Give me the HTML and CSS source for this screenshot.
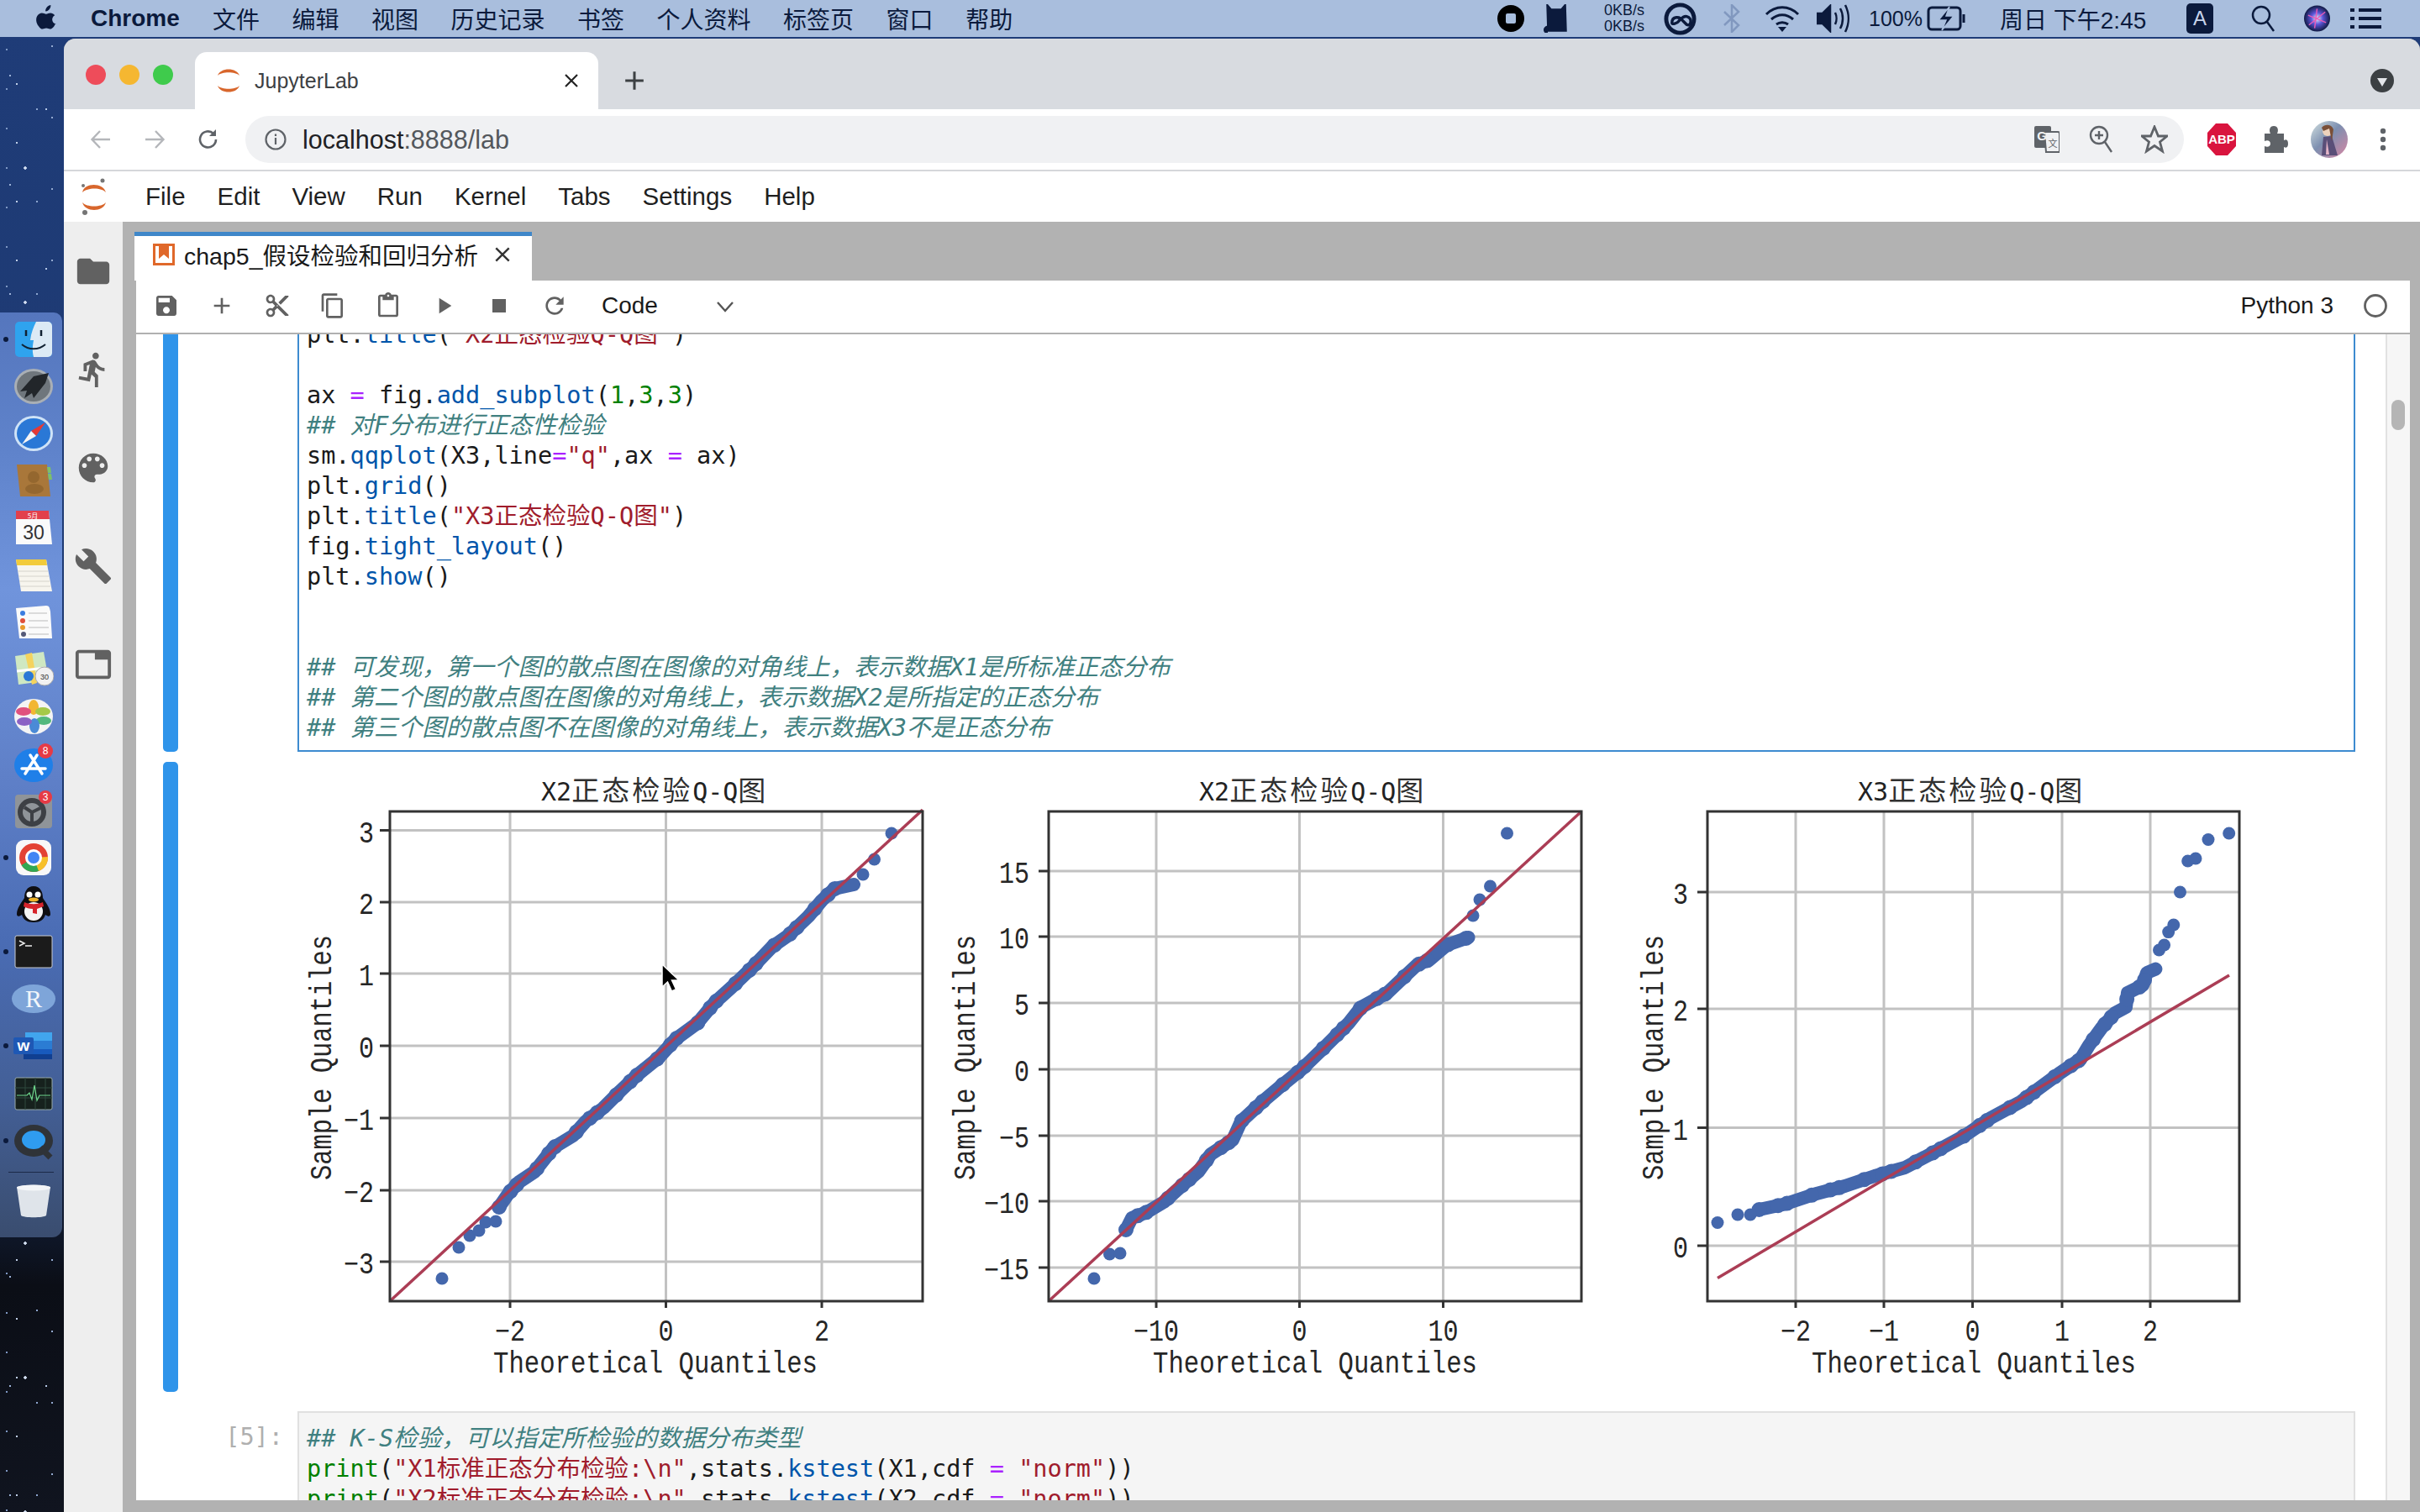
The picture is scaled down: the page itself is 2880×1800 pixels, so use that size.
FILE: index.html
```html
<!DOCTYPE html>
<html lang="zh">
<head>
<meta charset="utf-8">
<title>JupyterLab</title>
<link rel="stylesheet" href="styles.css">
</head>
<body>
<header class="menubar">
  <svg class="apple" viewBox="0 0 24 28"><path d="M17 1c.2 2-.6 3.600-1.600 4.800-1.100 1.300-2.600 2.200-4.200 2-.2-1.800.7-3.500 1.600-4.600C13.900 2 15.600 1.100 17 1zM22.500 21c-.7 1.600-1 2.300-1.900 3.700-1.300 1.900-3 2.900-4.500 2.900-1.400 0-2.200-.9-4-.9s-2.700.9-4.100.9c-1.700 0-3-1.200-4.400-3.200C.5 21 .3 15.800 2 13.100c1.300-2 3.300-3.200 5.200-3.200s3.200 1.100 4.800 1.100c1.500 0 2.500-1.100 4.700-1.100 1.700 0 3.500.9 4.800 2.500-4.200 2.300-3.500 8.300 1 9.600z"/></svg>
  <strong class="menu-app">Chrome</strong>
  <nav class="menu-items"><span>文件</span><span>编辑</span><span>视图</span><span>历史记录</span><span>书签</span><span>个人资料</span><span>标签页</span><span>窗口</span><span>帮助</span></nav>
  <div class="status">
    <svg class="st-stop" viewBox="0 0 32 32"><circle cx="16" cy="16" r="16"/><rect x="10" y="10" width="12" height="12" rx="2" fill="#a9bedd"/></svg>
    <svg class="st-cat ml-22" viewBox="0 0 32 34"><path d="M5 0l5 6h12l5-6 1 32H6zM6 26c-3 1-5 3-4 6 .6 1.500 2.500 2 4 1.500" stroke="#0b1a3c" stroke-width="1.500"/></svg>
    <div class="st-net ml-41"><span>0KB/s</span><span>0KB/s</span></div>
    <svg class="st-cc ml-19" viewBox="0 0 40 40" fill="none" stroke="#0b1a3c" stroke-width="5"><circle cx="20" cy="20" r="17"/><path d="M10 25c0-9 10-8 13-3l5 5c5 3 8-8 0-10-4-1-6 2-9 5-3 4-9 5-9 3z" stroke-width="3.500"/></svg>
    <svg class="st-bt ml-31" viewBox="0 0 22 34" fill="none" stroke="#8198bf" stroke-width="2.500"><path d="M2 9l17 16-8 8V1l8 8L2 25"/></svg>
    <svg class="st-wifi ml-28" viewBox="0 0 42 34" fill="none" stroke="#0b1a3c" stroke-width="3"><path d="M2 12c11-11 27-11 38 0M8 18c8-7 18-7 26 0M14 24c4-3 10-3 14 0"/><path d="M21 33l-5-6h10z" fill="#0b1a3c" stroke="none"/></svg>
    <svg class="st-vol ml-20" viewBox="0 0 40 34" fill="none" stroke="#0b1a3c" stroke-width="2.500"><path d="M1 11h6l9-9v30l-9-9H1z" fill="#0b1a3c"/><path d="M22 10c2 4 2 10 0 14M28 5c4 7 4 17 0 24M34 1c5 10 5 22 0 32"/></svg>
    <span class="st-pct ml-22">100%</span>
    <svg class="st-batt ml-8" viewBox="0 0 47 32" fill="none" stroke="#0b1a3c" stroke-width="3"><rect x="2" y="3" width="38" height="26" rx="4"/><path d="M44 11v10"/><path d="M27 2L14 18h9l-5 12 14-17h-9z" fill="#0b1a3c" stroke="#a9bedd" stroke-width="1.500"/></svg>
    <span class="st-clock ml-40">周日 下午2:45</span>
    <span class="st-a ml-39">A</span>
    <svg class="st-search ml-44" viewBox="0 0 30 34" fill="none" stroke="#0b1a3c" stroke-width="2.500"><circle cx="13" cy="13" r="10"/><path d="M20 21l8 11"/></svg>
    <svg class="st-siri ml-34" viewBox="0 0 32 32"><defs><radialGradient id="siri"><stop offset="0" stop-color="#e8f6ff"/><stop offset=".45" stop-color="#5c55d8"/><stop offset="1" stop-color="#101a44"/></radialGradient></defs><circle cx="16" cy="16" r="16" fill="url(#siri)"/><path d="M5 12l22 9M16 4l-3 24M6 24L26 8" stroke="#e85bb5" stroke-width="1.500"/></svg>
    <svg class="st-list ml-24" viewBox="0 0 37 30"><path d="M0 3h5v4H0zM10 3h27v4H10zM0 13h5v4H0zM10 13h27v4H10zM0 23h5v4H0zM10 23h27v4H10z" fill="#0b1a3c"/></svg>
  </div>
</header>

<div class="desktop">
  <aside class="dock-col">
    <div class="dock">
      <div class="dock-item running"><svg viewBox="0 0 48 48"><rect x="2" y="3" width="44" height="42" rx="5" fill="#2fa3ee"/><path d="M27 3h14a5 5 0 0 1 5 5v32a5 5 0 0 1-5 5H24c-2-8-1-14 0-20h-4C21 16 24 9 27 3z" fill="#dceaf5"/><path d="M10 30c8 7 20 7 28 0" fill="none" stroke="#123" stroke-width="2"/><path d="M15 13v7M33 13v7" stroke="#123" stroke-width="2.500"/></svg></div>
      <div class="dock-item"><svg viewBox="0 0 48 48"><ellipse cx="24" cy="24" rx="23" ry="21" fill="#a9afb5"/><ellipse cx="24" cy="24" rx="20" ry="18" fill="#6f767c"/><path d="M42 8L24 12 8 30l8-1-3 9 9-6 2 6 14-18z" fill="#22262a"/></svg></div>
      <div class="dock-item"><svg viewBox="0 0 48 48"><ellipse cx="24" cy="24" rx="23" ry="21" fill="#cfe3f7"/><ellipse cx="24" cy="24" rx="20" ry="18" fill="#2a78d6"/><path d="M38 11L21 21l6 6z" fill="#e53935"/><path d="M10 37l11-16 6 6z" fill="#f5f5f5"/></svg></div>
      <div class="dock-item"><svg viewBox="0 0 48 48"><path d="M4 5h36l4 38H8z" fill="#a9773a"/><path d="M40 8h4l1 7h-4zM41 16h4l1 7h-4z" fill="#7cc06a"/><circle cx="24" cy="20" r="7" fill="#94672f"/><ellipse cx="25" cy="34" rx="11" ry="6" fill="#94672f"/></svg></div>
      <div class="dock-item"><svg viewBox="0 0 48 48"><path d="M3 4h39l4 40H3z" fill="#fafafa"/><path d="M3 4h39l1 10H3z" fill="#e2404c"/><text class="cal-m" x="23" y="13">5月</text><text class="cal-d" x="24" y="38">30</text></svg></div>
      <div class="dock-item"><svg viewBox="0 0 48 48"><path d="M3 5h36l7 38H9z" fill="#f7f5ee"/><path d="M3 5h36l1 7H4z" fill="#f2cb3b"/><path d="M5 19h36M6 25h36M7 31h36M8 37h36" stroke="#d5d3cb"/></svg></div>
      <div class="dock-item"><svg viewBox="0 0 48 48"><path d="M3 7l36-3c4 0 4 3 5 7l2 32H7z" fill="#fafafa"/><circle cx="11" cy="13" r="3" fill="#3b7de0"/><circle cx="11" cy="22" r="3" fill="#e0503a"/><circle cx="11" cy="30" r="3" fill="#e89a2c"/><circle cx="12" cy="38" r="3" fill="#555a78"/><path d="M18 13h22M18 22h23M18 30h24M18 38h24" stroke="#bbb"/></svg></div>
      <div class="dock-item"><svg viewBox="0 0 48 48"><path d="M2 8l34-5 6 34-36 5z" fill="#cfe8c2"/><path d="M14 6l8 36 6-2-6-36z" fill="#f4d35e"/><path d="M4 26l34-4" stroke="#fff" stroke-width="3"/><circle cx="18" cy="32" r="6" fill="#2a78d6"/><circle cx="37" cy="32" r="11" fill="#f1f1f1" stroke="#aaa"/><text class="map-t" x="37" y="36">30</text></svg></div>
      <div class="dock-item"><svg viewBox="0 0 48 48"><ellipse cx="24" cy="24" rx="23" ry="21" fill="#f4f4f4"/><ellipse cx="24" cy="13" rx="6" ry="9" fill="#f2b632"/><ellipse cx="35" cy="18" rx="9" ry="5" fill="#a5c948"/><ellipse cx="36" cy="29" rx="9" ry="5" fill="#53b87d"/><ellipse cx="25" cy="35" rx="6" ry="9" fill="#4b8ad6"/><ellipse cx="13" cy="30" rx="9" ry="5" fill="#8b62c4"/><ellipse cx="12" cy="18" rx="9" ry="5" fill="#e0517e"/></svg></div>
      <div class="dock-item"><svg viewBox="0 0 48 48"><ellipse cx="24" cy="26" rx="23" ry="20" fill="#1f7fe8"/><path d="M14 36l14-22M34 36L20 14M10 30h28" stroke="#fff" stroke-width="3.500" fill="none" stroke-linecap="round"/><circle cx="38" cy="9" r="9" fill="#e63a45"/><text class="badge-t" x="38" y="13">8</text></svg></div>
      <div class="dock-item"><svg viewBox="0 0 48 48"><rect x="2" y="5" width="44" height="40" rx="4" fill="#8f9499"/><circle cx="22" cy="26" r="17" fill="#3d4045"/><circle cx="22" cy="26" r="11" fill="#8f9499"/><path d="M22 26l-9-6M22 26l10-5M22 26v11" stroke="#3d4045" stroke-width="4"/><circle cx="38" cy="8" r="8" fill="#e63a45"/><text class="badge-t" x="38" y="12">3</text></svg></div>
      <div class="dock-item running"><svg viewBox="0 0 48 48"><rect x="3" y="3" width="42" height="42" rx="9" fill="#f8f8f8"/><circle cx="24" cy="24" r="17" fill="#e34234"/><path d="M24 24L9.500 33A17 17 0 0 0 31 39.500z" fill="#31a853"/><path d="M24 24l17-1A17 17 0 0 1 30 40z" fill="#f7c02a"/><circle cx="24" cy="24" r="8.500" fill="#4285f4" stroke="#fff" stroke-width="3"/></svg></div>
      <div class="dock-item"><svg viewBox="0 0 48 48"><path d="M24 2c8 0 11 7 11 14 3 5 9 12 9 19 0 3-2 4-6 1-2 6-6 9-14 9s-12-3-14-9c-4 3-6 2-6-1 0-7 6-14 9-19C13 9 16 2 24 2z" fill="#0e0e12"/><ellipse cx="24" cy="32" rx="11" ry="11" fill="#f4f4f4"/><circle cx="19" cy="12" r="3.500" fill="#fff"/><circle cx="29" cy="12" r="3.500" fill="#fff"/><path d="M13 21c6 3 16 3 22 0l1 5-8 3v6l-5-1v-5c-4 0-8-1-11-3z" fill="#d6242b"/><ellipse cx="24" cy="18" rx="6" ry="2.500" fill="#f0b429"/></svg></div>
      <div class="dock-item running"><svg viewBox="0 0 48 48"><rect x="2" y="5" width="44" height="38" rx="2" fill="#1b1b1b" stroke="#c9ccd1"/><path d="M7 11l6 3-6 3M14 17h8" stroke="#eee" stroke-width="1.500" fill="none"/></svg></div>
      <div class="dock-item dock-r"><span>R</span></div>
      <div class="dock-item running"><svg viewBox="0 0 48 48"><path d="M14 8h32v10H14z" fill="#41a5ee"/><path d="M14 18h32v10H14z" fill="#2b7cd3"/><path d="M12 28h34v6H12z" fill="#185abd"/><path d="M12 34h34v6H12z" fill="#103f91"/><rect x="0" y="14" width="24" height="20" rx="2" fill="#1e58b5"/><text class="word-t" x="12" y="30">w</text></svg></div>
      <div class="dock-item"><svg viewBox="0 0 48 48"><rect x="2" y="5" width="44" height="38" rx="2" fill="#16211d" stroke="#9aa"/><path d="M2 17h44M2 29h44M14 5v38M26 5v38M38 5v38" stroke="#2f4a3e"/><path d="M4 26h12l3-3 3 8 3-17 3 18 3-6h13" stroke="#6fd88d" fill="none" stroke-width="1.200"/></svg></div>
      <div class="dock-item running"><svg viewBox="0 0 48 48"><ellipse cx="24" cy="24" rx="23" ry="19" fill="#2f3338"/><ellipse cx="24" cy="23" rx="14" ry="11" fill="#2f9cf0"/><path d="M32 32l12 12" stroke="#2f3338" stroke-width="7"/></svg></div>
      <div class="dock-sep"></div>
      <div class="dock-item"><svg viewBox="0 0 48 48"><path d="M4 8c6-3 34-3 40 0l-5 34c-3 3-27 3-30 0z" fill="#dfe4ea"/><ellipse cx="24" cy="9" rx="20" ry="3.500" fill="#f4f6f8"/></svg></div>
    </div>
  </aside>

  <main class="window">
    <div class="tabstrip">
      <div class="lights"><i class="red"></i><i class="amber"></i><i class="green"></i></div>
      <div class="chrome-tab">
        <svg class="favicon" viewBox="0 0 30 34"><path d="M2 11C5 1 25 1 28 11 23 6 7 6 2 11zM2 23c3 10 23 10 26 0-5 5-21 5-26 0z" fill="#d8662c"/></svg>
        <span class="chrome-tab-title">JupyterLab</span>
        <svg class="chrome-tab-x" viewBox="0 0 20 20" stroke="#222" stroke-width="2.200"><path d="M3 3l14 14M17 3L3 17"/></svg>
      </div>
      <svg class="newtab" viewBox="0 0 24 24" stroke="#3c4043" stroke-width="2.800"><path d="M12 2v20M2 12h20"/></svg>
      <svg class="tabcaret" viewBox="0 0 28 28"><circle cx="14" cy="14" r="14" fill="#3c4043"/><path d="M8 11h12l-6 10z" fill="#e4e6ea"/></svg>
    </div>

    <div class="urlbar">
      <svg class="nav-ic ml-30" viewBox="0 0 28 28" fill="none" stroke="#b4b6ba" stroke-width="2.400"><path d="M25 14H4M13 4L3.500 14 13 24"/></svg>
      <svg class="nav-ic ml-36" viewBox="0 0 28 28" fill="none" stroke="#b4b6ba" stroke-width="2.400"><path d="M3 14h21M15 4l9.500 10L15 24"/></svg>
      <svg class="nav-ic ml-36" viewBox="0 0 28 28" fill="none" stroke="#5f6368" stroke-width="2.600"><path d="M23 14a9.500 9.500 0 1 1-3-7"/><path d="M23 2v8h-8" fill="#5f6368" stroke="none"/></svg>
      <div class="pill">
        <svg class="info" viewBox="0 0 28 28" fill="none" stroke="#5f6368" stroke-width="2.200"><circle cx="14" cy="14" r="11.500"/><path d="M14 12v8M14 7.500v2.500"/></svg>
        <span class="url">localhost<em>:8888/lab</em></span>
        <svg class="pill-translate" viewBox="0 0 30 34"><rect x="0" y="1" width="20" height="26" rx="2" fill="#5f6368"/><path d="M12 8h16a2 2 0 0 1 2 2v22H14z" fill="#f0f1f3" stroke="#5f6368" stroke-width="2"/><text class="tr-g" x="9" y="18">G</text><text class="tr-z" x="22" y="26">文</text></svg>
        <svg class="pill-zoom ml-35" viewBox="0 0 28 34" fill="none" stroke="#5f6368" stroke-width="2.400"><circle cx="12" cy="12" r="10"/><path d="M19 20l8 12M12 7v10M7 12h10"/></svg>
        <svg class="pill-star ml-34" viewBox="0 0 32 34" fill="none" stroke="#5f6368" stroke-width="2.800"><path d="M16 2l4.500 11H31l-8.500 7 3 11L16 24.500 6.500 31l3-11L1 13h10.500z"/></svg>
      </div>
      <svg class="abp ml-28" viewBox="0 0 34 38"><path d="M10 0h14l10 11v16L24 38H10L0 27V11z" fill="#d9143e"/><text class="abp-t" x="17" y="24">ABP</text></svg>
      <svg class="puzzle ml-32" viewBox="0 0 30 34"><path d="M2 10h7c-2-4-1-9 4-9s6 5 4 9h8v8c4-2 5 1 5 4s-1 6-5 4v7H2v-8c4 2 7 0 7-3s-3-5-7-3z" fill="#5f6368"/></svg>
      <svg class="avatar ml-27" viewBox="0 0 44 44"><defs><linearGradient id="av" x1="0" y1="0" x2="1" y2="1"><stop offset="0" stop-color="#d5e3e2"/><stop offset=".45" stop-color="#7d8fb0"/><stop offset="1" stop-color="#d887a4"/></linearGradient></defs><circle cx="22" cy="22" r="22" fill="url(#av)"/><circle cx="20" cy="12" r="6" fill="#edd2bc"/><path d="M15 19l10-1 7 23H13z" fill="#5a4f78"/><path d="M19 22l3 18h-4z" fill="#e5b5c8"/><path d="M13 8c4-5 12-4 14 2l-2 14-3-15-7 3z" fill="#7a4f38"/></svg>
      <svg class="dots ml-38" viewBox="0 0 8 28" fill="#5f6368"><circle cx="4" cy="4" r="3.200"/><circle cx="4" cy="14" r="3.200"/><circle cx="4" cy="24" r="3.200"/></svg>
    </div>

    <nav class="jp-menu">
      <svg class="jp-logo" viewBox="0 0 32 46"><path d="M2 18C4 6 27 6 30 18 25 12 8 12 2 18zM2 30c3 12 25 12 28 0-5 6-23 6-28 0z" fill="#d8662c"/><circle cx="26" cy="4" r="2.500" fill="#757575"/><circle cx="3" cy="10" r="2" fill="#757575"/><circle cx="5" cy="42" r="3" fill="#757575"/></svg>
      <span>File</span><span>Edit</span><span>View</span><span>Run</span><span>Kernel</span><span>Tabs</span><span>Settings</span><span>Help</span>
    </nav>

    <div class="jp-main">
      <aside class="sidebar">
        <svg viewBox="0 0 24 24"><path d="M10 4H4c-1.100 0-2 .9-2 2v12c0 1.100.9 2 2 2h16c1.100 0 2-.9 2-2V8c0-1.100-.9-2-2-2h-8l-2-2z"/></svg>
        <svg viewBox="0 0 24 24"><path d="M13.490 5.480c1.100 0 2-.9 2-2s-.9-2-2-2-2 .9-2 2 .9 2 2 2zm-3.600 13.900l1-4.400 2.100 2v6h2v-7.500l-2.100-2 .6-3c1.300 1.500 3.300 2.500 5.500 2.500v-2c-1.900 0-3.500-1-4.300-2.400l-1-1.600c-.4-.6-1-1-1.700-1-.3 0-.5.1-.8.1l-5.200 2.200v4.700h2v-3.400l1.800-.7-1.600 8.100-4.900-1-.4 2 7 1.400z"/></svg>
        <svg viewBox="0 0 24 24"><path d="M12 3c-4.970 0-9 4.030-9 9s4.030 9 9 9c.83 0 1.500-.67 1.500-1.500 0-.39-.15-.74-.39-1.010-.23-.26-.38-.61-.38-.99 0-.83.67-1.500 1.500-1.500H16c2.760 0 5-2.240 5-5 0-4.420-4.030-8-9-8zm-5.500 9c-.83 0-1.500-.67-1.500-1.500S5.670 9 6.500 9 8 9.670 8 10.500 7.330 12 6.500 12zm3-4C8.670 8 8 7.330 8 6.500S8.670 5 9.500 5s1.500.67 1.500 1.500S10.330 8 9.500 8zm5 0c-.83 0-1.500-.67-1.500-1.500S13.670 5 14.500 5s1.500.67 1.500 1.500S15.330 8 14.500 8zm3 4c-.83 0-1.500-.67-1.500-1.500S16.670 9 17.500 9s1.500.67 1.500 1.500-.67 1.500-1.500 1.500z"/></svg>
        <svg viewBox="0 0 24 24"><path d="M22.700 19l-9.100-9.100c.9-2.300.4-5-1.500-6.900-2-2-5-2.400-7.400-1.300L9 6 6 9 1.600 4.700C.4 7.100.9 10.100 2.900 12.100c1.900 1.900 4.600 2.400 6.900 1.500l9.100 9.100c.4.4 1 .4 1.400 0l2.300-2.300c.5-.4.5-1.100.1-1.400z"/></svg>
        <svg viewBox="0 0 24 24"><path d="M21 3H3c-1.100 0-2 .9-2 2v14c0 1.100.9 2 2 2h18c1.100 0 2-.9 2-2V5c0-1.100-.9-2-2-2zm0 16H3V5h10v4h8v10z"/></svg>
      </aside>

      <section class="work">
        <div class="nb-tab">
          <svg class="nb-icon" viewBox="0 0 26 26"><rect x="1.500" y="1.500" width="23" height="23" fill="#fff" stroke="#e0682a" stroke-width="3"/><path d="M7 3h12v15l-6-5-6 5z" fill="#e0682a"/></svg>
          <span class="nb-title">chap5_假设检验和回归分析</span>
          <svg class="nb-x" viewBox="0 0 20 20" stroke="#333" stroke-width="2.200"><path d="M3 3l14 14M17 3L3 17"/></svg>
        </div>
        <div class="nb-panel">
          <div class="nb-toolbar">
            <svg viewBox="0 0 24 24"><path d="M17 3H5c-1.110 0-2 .9-2 2v14c0 1.100.89 2 2 2h14c1.100 0 2-.9 2-2V7l-4-4zm-5 16c-1.660 0-3-1.340-3-3s1.340-3 3-3 3 1.340 3 3-1.340 3-3 3zm3-10H5V5h10v4z"/></svg>
            <svg viewBox="0 0 24 24"><path d="M19 13h-6v6h-2v-6H5v-2h6V5h2v6h6v2z"/></svg>
            <svg viewBox="0 0 24 24"><path d="M9.640 7.640c.23-.5.36-1.050.36-1.640 0-2.210-1.790-4-4-4S2 3.790 2 6s1.790 4 4 4c.59 0 1.140-.13 1.640-.36L10 12l-2.360 2.360C7.140 14.130 6.590 14 6 14c-2.210 0-4 1.790-4 4s1.790 4 4 4 4-1.790 4-4c0-.59-.13-1.140-.36-1.640L12 14l7 7h3v-1L9.640 7.640zM6 8c-1.100 0-2-.89-2-2s.9-2 2-2 2 .89 2 2-.9 2-2 2zm0 12c-1.100 0-2-.89-2-2s.9-2 2-2 2 .89 2 2-.9 2-2 2zm6-7.500c-.28 0-.5-.22-.5-.5s.22-.5.5-.5.5.22.5.5-.22.5-.5.5zM19 3l-6 6 2 2 7-7V3z"/></svg>
            <svg viewBox="0 0 24 24"><path d="M16 1H4c-1.100 0-2 .9-2 2v14h2V3h12V1zm3 4H8c-1.100 0-2 .9-2 2v14c0 1.100.9 2 2 2h11c1.100 0 2-.9 2-2V7c0-1.100-.9-2-2-2zm0 16H8V7h11v14z"/></svg>
            <svg viewBox="0 0 24 24"><path d="M19 2h-4.180C14.400.84 13.300 0 12 0c-1.300 0-2.400.84-2.820 2H5c-1.100 0-2 .9-2 2v16c0 1.100.9 2 2 2h14c1.100 0 2-.9 2-2V4c0-1.100-.9-2-2-2zm-7 0c.55 0 1 .45 1 1s-.45 1-1 1-1-.45-1-1 .45-1 1-1zm7 18H5V4h2v3h10V4h2v16z"/></svg>
            <svg viewBox="0 0 24 24"><path d="M8 5v14l11-7z"/></svg>
            <svg viewBox="0 0 24 24"><path d="M6 6h12v12H6z"/></svg>
            <svg viewBox="0 0 24 24"><path d="M17.650 6.350C16.200 4.900 14.210 4 12 4c-4.420 0-7.990 3.580-7.990 8s3.570 8 7.990 8c3.730 0 6.840-2.550 7.730-6h-2.080c-.82 2.330-3.040 4-5.650 4-3.310 0-6-2.690-6-6s2.690-6 6-6c1.660 0 3.140.69 4.220 1.780L13 11h7V4l-2.350 2.350z"/></svg>
            <span class="celltype">Code</span>
            <svg class="chev" viewBox="0 0 24 24" fill="none" stroke="#555" stroke-width="2.400"><path d="M3 8l9 10 9-10"/></svg>
            <span class="kernel">Python 3</span>
            <svg class="kernel-dot" viewBox="0 0 28 28" fill="none" stroke="#616161" stroke-width="2.800"><circle cx="14" cy="14" r="12.500"/></svg>
          </div>
          <div class="nb-scroll">
            <div class="cells">
              <div class="cell cell-first">
                <div class="collapser"></div>
                <div class="prompt"></div>
                <div class="input active">
                  <div class="ln">plt.<b class="fn">title</b>(<b class="str">"X2正态检验Q-Q图"</b>)</div>
                  <div class="ln"></div>
                  <div class="ln">ax <b class="op">=</b> fig.<b class="fn">add_subplot</b>(<b class="num">1</b>,<b class="num">3</b>,<b class="num">3</b>)</div>
                  <div class="ln cm">## 对F分布进行正态性检验</div>
                  <div class="ln">sm.<b class="fn">qqplot</b>(X3,line<b class="op">=</b><b class="str">"q"</b>,ax <b class="op">=</b> ax)</div>
                  <div class="ln">plt.<b class="fn">grid</b>()</div>
                  <div class="ln">plt.<b class="fn">title</b>(<b class="str">"X3正态检验Q-Q图"</b>)</div>
                  <div class="ln">fig.<b class="fn">tight_layout</b>()</div>
                  <div class="ln">plt.<b class="fn">show</b>()</div>
                  <div class="ln"></div>
                  <div class="ln"></div>
                  <div class="ln cm">## 可发现，第一个图的散点图在图像的对角线上，表示数据X1是所标准正态分布</div>
                  <div class="ln cm">## 第二个图的散点图在图像的对角线上，表示数据X2是所指定的正态分布</div>
                  <div class="ln cm">## 第三个图的散点图不在图像的对角线上，表示数据X3不是正态分布</div>
                </div>
              </div>

              <div class="cell cell-output">
                <div class="collapser"></div>
                <div class="prompt"></div>
                <svg class="figure" viewBox="354 907 2400 751">
                  <defs>
                    <path id="b1" d="M594 1437L605 1421 618 1407 636 1395 651 1376 659 1366 682 1352 697 1335 718 1319 738 1299 758 1280 784 1259 804 1237 830 1218 850 1194 871 1175 896 1151 919 1127 939 1113 962 1091 978 1072 993 1058 1016 1053"/>
                    <path id="b2" d="M1340 1464L1347 1450 1365 1443 1385 1431 1406 1412 1426 1395 1441 1374 1467 1357 1477 1335 1503 1311 1528 1290 1549 1273 1579 1244 1605 1218 1620 1199 1651 1182 1671 1163 1686 1149 1702 1142 1722 1125 1747.500 1116"/>
                    <path id="b3" d="M2093.500 1440L2124 1433.500 2160 1421.500 2195.500 1412 2231 1400 2267 1390 2303 1371 2338 1352 2369 1331 2405 1311.500 2450.600 1278 2476 1261 2486 1244.500 2501.600 1223 2517 1206 2530 1199 2532 1182 2550 1173 2555 1158 2565.400 1153.600"/>
                  </defs>
                  <!-- plot 1 -->
                  <path class="grid" d="M607 966V1549M792.500 966V1549M978 966V1549M464 988.500H1098M464 1074H1098M464 1159H1098M464 1245H1098M464 1331H1098M464 1417H1098M464 1502H1098"/>
                  <path class="tick" d="M607 1549v8M792.500 1549v8M978 1549v8M452 988.500h12M452 1074h12M452 1159h12M452 1245h12M452 1331h12M452 1417h12M452 1502h12"/>
                  <use href="#b1" class="band"/><use href="#b1" class="beads"/>
                  <g class="pts"><circle cx="526" cy="1522" r="7.500"/><circle cx="546" cy="1485" r="7.500"/><circle cx="559" cy="1471" r="7.500"/><circle cx="570" cy="1465" r="7.500"/><circle cx="578" cy="1455" r="7.500"/><circle cx="590" cy="1454" r="7.500"/><circle cx="1027" cy="1041" r="7.500"/><circle cx="1040.500" cy="1023" r="7.500"/><circle cx="1061" cy="992" r="7.500"/></g>
                  <path class="fit" d="M464 1549L1098 964"/>
                  <rect class="frame" x="464" y="966" width="634" height="583"/>
                  <text class="num-l" text-anchor="end" x="445" y="1000.500" textLength="18" lengthAdjust="spacingAndGlyphs">3</text>
                  <text class="num-l" text-anchor="end" x="445" y="1086" textLength="18" lengthAdjust="spacingAndGlyphs">2</text>
                  <text class="num-l" text-anchor="end" x="445" y="1171" textLength="18" lengthAdjust="spacingAndGlyphs">1</text>
                  <text class="num-l" text-anchor="end" x="445" y="1257" textLength="18" lengthAdjust="spacingAndGlyphs">0</text>
                  <text class="num-l" text-anchor="end" x="445" y="1343" textLength="36" lengthAdjust="spacingAndGlyphs">−1</text>
                  <text class="num-l" text-anchor="end" x="445" y="1429" textLength="36" lengthAdjust="spacingAndGlyphs">−2</text>
                  <text class="num-l" text-anchor="end" x="445" y="1514" textLength="36" lengthAdjust="spacingAndGlyphs">−3</text>
                  <text class="num-l" text-anchor="middle" x="607" y="1594" textLength="36" lengthAdjust="spacingAndGlyphs">−2</text>
                  <text class="num-l" text-anchor="middle" x="792.500" y="1594" textLength="18" lengthAdjust="spacingAndGlyphs">0</text>
                  <text class="num-l" text-anchor="middle" x="978" y="1594" textLength="18" lengthAdjust="spacingAndGlyphs">2</text>
                  <text class="axis-l" x="587" y="1634" textLength="386" lengthAdjust="spacingAndGlyphs">Theoretical Quantiles</text>
                  <text class="axis-l" transform="rotate(-90 382 1259)" x="236" y="1271" textLength="292" lengthAdjust="spacingAndGlyphs">Sample Quantiles</text>
                  <text class="title-l" x="644" y="953"><tspan class="lat">X2</tspan>正态检验<tspan class="lat">Q-Q</tspan>图</text>

                  <!-- plot 2 -->
                  <path class="grid" d="M1376 966V1549M1546.500 966V1549M1717.500 966V1549M1248 1037H1882M1248 1115H1882M1248 1194H1882M1248 1273H1882M1248 1352H1882M1248 1430H1882M1248 1509H1882"/>
                  <path class="tick" d="M1376 1549v8M1546.500 1549v8M1717.500 1549v8M1236 1037h12M1236 1115h12M1236 1194h12M1236 1273h12M1236 1352h12M1236 1430h12M1236 1509h12"/>
                  <use href="#b2" class="band"/><use href="#b2" class="beads"/>
                  <g class="pts"><circle cx="1302" cy="1522" r="7.500"/><circle cx="1320.500" cy="1493" r="7.500"/><circle cx="1333" cy="1492" r="7.500"/><circle cx="1753" cy="1090" r="7.500"/><circle cx="1761" cy="1071" r="7.500"/><circle cx="1773.500" cy="1055" r="7.500"/><circle cx="1793.500" cy="992" r="7.500"/></g>
                  <path class="fit" d="M1248 1549L1882 966"/>
                  <rect class="frame" x="1248" y="966" width="634" height="583"/>
                  <text class="num-l" text-anchor="end" x="1225" y="1049" textLength="36" lengthAdjust="spacingAndGlyphs">15</text>
                  <text class="num-l" text-anchor="end" x="1225" y="1127" textLength="36" lengthAdjust="spacingAndGlyphs">10</text>
                  <text class="num-l" text-anchor="end" x="1225" y="1206" textLength="18" lengthAdjust="spacingAndGlyphs">5</text>
                  <text class="num-l" text-anchor="end" x="1225" y="1285" textLength="18" lengthAdjust="spacingAndGlyphs">0</text>
                  <text class="num-l" text-anchor="end" x="1225" y="1364" textLength="36" lengthAdjust="spacingAndGlyphs">−5</text>
                  <text class="num-l" text-anchor="end" x="1225" y="1442" textLength="54" lengthAdjust="spacingAndGlyphs">−10</text>
                  <text class="num-l" text-anchor="end" x="1225" y="1521" textLength="54" lengthAdjust="spacingAndGlyphs">−15</text>
                  <text class="num-l" text-anchor="middle" x="1376" y="1594" textLength="54" lengthAdjust="spacingAndGlyphs">−10</text>
                  <text class="num-l" text-anchor="middle" x="1546.500" y="1594" textLength="18" lengthAdjust="spacingAndGlyphs">0</text>
                  <text class="num-l" text-anchor="middle" x="1717.500" y="1594" textLength="36" lengthAdjust="spacingAndGlyphs">10</text>
                  <text class="axis-l" x="1372" y="1634" textLength="386" lengthAdjust="spacingAndGlyphs">Theoretical Quantiles</text>
                  <text class="axis-l" transform="rotate(-90 1148 1259)" x="1002" y="1271" textLength="292" lengthAdjust="spacingAndGlyphs">Sample Quantiles</text>
                  <text class="title-l" x="1427" y="953"><tspan class="lat">X2</tspan>正态检验<tspan class="lat">Q-Q</tspan>图</text>

                  <!-- plot 3 -->
                  <path class="grid" d="M2137 966V1549M2242 966V1549M2347.500 966V1549M2454 966V1549M2559 966V1549M2032 1062H2665M2032 1201H2665M2032 1342.500H2665M2032 1483H2665"/>
                  <path class="tick" d="M2137 1549v8M2242 1549v8M2347.500 1549v8M2454 1549v8M2559 1549v8M2020 1062h12M2020 1201h12M2020 1342.500h12M2020 1483h12"/>
                  <use href="#b3" class="band"/><use href="#b3" class="beads"/>
                  <g class="pts"><circle cx="2044" cy="1455.500" r="7.500"/><circle cx="2068" cy="1446" r="7.500"/><circle cx="2083" cy="1446" r="7.500"/><circle cx="2569.500" cy="1131" r="7.500"/><circle cx="2575.600" cy="1125" r="7.500"/><circle cx="2580.700" cy="1109.600" r="7.500"/><circle cx="2586.800" cy="1101" r="7.500"/><circle cx="2594.500" cy="1062" r="7.500"/><circle cx="2603.700" cy="1025" r="7.500"/><circle cx="2613" cy="1022" r="7.500"/><circle cx="2628" cy="999.500" r="7.500"/><circle cx="2652.700" cy="992" r="7.500"/></g>
                  <path class="fit" d="M2044 1521.500L2653 1161"/>
                  <rect class="frame" x="2032" y="966" width="633" height="583"/>
                  <text class="num-l" text-anchor="end" x="2009" y="1074" textLength="18" lengthAdjust="spacingAndGlyphs">3</text>
                  <text class="num-l" text-anchor="end" x="2009" y="1213" textLength="18" lengthAdjust="spacingAndGlyphs">2</text>
                  <text class="num-l" text-anchor="end" x="2009" y="1354.500" textLength="18" lengthAdjust="spacingAndGlyphs">1</text>
                  <text class="num-l" text-anchor="end" x="2009" y="1495" textLength="18" lengthAdjust="spacingAndGlyphs">0</text>
                  <text class="num-l" text-anchor="middle" x="2137" y="1594" textLength="36" lengthAdjust="spacingAndGlyphs">−2</text>
                  <text class="num-l" text-anchor="middle" x="2242" y="1594" textLength="36" lengthAdjust="spacingAndGlyphs">−1</text>
                  <text class="num-l" text-anchor="middle" x="2347.500" y="1594" textLength="18" lengthAdjust="spacingAndGlyphs">0</text>
                  <text class="num-l" text-anchor="middle" x="2454" y="1594" textLength="18" lengthAdjust="spacingAndGlyphs">1</text>
                  <text class="num-l" text-anchor="middle" x="2559" y="1594" textLength="18" lengthAdjust="spacingAndGlyphs">2</text>
                  <text class="axis-l" x="2156" y="1634" textLength="386" lengthAdjust="spacingAndGlyphs">Theoretical Quantiles</text>
                  <text class="axis-l" transform="rotate(-90 1967 1259)" x="1821" y="1271" textLength="292" lengthAdjust="spacingAndGlyphs">Sample Quantiles</text>
                  <text class="title-l" x="2211" y="953"><tspan class="lat">X3</tspan>正态检验<tspan class="lat">Q-Q</tspan>图</text>

                  <!-- pointer -->
                  <path class="cursor" d="M788 1148v27l6.500-6 5 11 5-2.200-5-10.800h8.500z"/>
                </svg>
              </div>

              <div class="cell cell-code">
                <div class="collapser off"></div>
                <div class="prompt">[5]:</div>
                <div class="input idle">
                  <div class="ln cm">## K-S检验，可以指定所检验的数据分布类型</div>
                  <div class="ln"><b class="num">print</b>(<b class="str">"X1标准正态分布检验:\n"</b>,stats.<b class="fn">kstest</b>(X1,cdf <b class="op">=</b> <b class="str">"norm"</b>))</div>
                  <div class="ln"><b class="num">print</b>(<b class="str">"X2标准正态分布检验:\n"</b>,stats.<b class="fn">kstest</b>(X2,cdf <b class="op">=</b> <b class="str">"norm"</b>))</div>
                </div>
              </div>
            </div>
            <div class="scroll-col"><div class="thumb"></div></div>
          </div>
        </div>
      </section>
    </div>
  </main>
</div>
</body>
</html>
```

FILE: styles.css
```css
* { box-sizing: border-box; }
html, body { margin: 0; height: 100%; }
body {
  width: 2880px; height: 1800px; overflow: hidden;
  display: flex; flex-direction: column;
  font-family: "Liberation Sans", "Noto Sans CJK SC", sans-serif;
  color: #1a1a1a;
  background-color: #1b3567;
  background-image:
    radial-gradient(circle at 30px 40px, #d3dff2 0 1.5px, transparent 2px),
    radial-gradient(circle at 12px 90px, #9db3d8 0 1px, transparent 1.5px),
    radial-gradient(circle at 55px 130px, #b6c8e6 0 1px, transparent 1.5px),
    radial-gradient(circle at 44px 20px, #8ea6cf 0 1px, transparent 1.5px),
    radial-gradient(circle at 20px 30px, #c0cfe8 0 1px, transparent 1.5px),
    radial-gradient(circle at 62px 55px, #93a9d0 0 1px, transparent 1.5px),
    radial-gradient(circle at 8px 12px, #7f98c4 0 .8px, transparent 1.3px),
    linear-gradient(180deg, #1f3c78 0, #1d3970 50%, #16284d 75%, #0b0e16 85%, #10141f 100%);
  background-size: 76px 160px, 76px 130px, 76px 190px, 76px 110px, 76px 70px, 76px 85px, 76px 47px, 100% 100%;
}

.ml-8 { margin-left: 8px; } .ml-19 { margin-left: 19px; } .ml-20 { margin-left: 20px; }
.ml-22 { margin-left: 22px; } .ml-24 { margin-left: 24px; } .ml-27 { margin-left: 27px; }
.ml-28 { margin-left: 28px; } .ml-30 { margin-left: 30px; } .ml-31 { margin-left: 31px; }
.ml-32 { margin-left: 32px; } .ml-34 { margin-left: 34px; } .ml-35 { margin-left: 35px; }
.ml-36 { margin-left: 36px; } .ml-38 { margin-left: 38px; } .ml-39 { margin-left: 39px; }
.ml-40 { margin-left: 40px; } .ml-41 { margin-left: 41px; } .ml-44 { margin-left: 44px; }

/* macOS menu bar */
.menubar {
  height: 44px; flex: none; display: flex; align-items: center;
  background: #a9bedd; color: #0b1a3c; font-size: 28px; padding-left: 42px;
}
.apple { width: 26px; height: 30px; fill: #0b1a3c; margin-top: -4px; }
.menu-app { margin-left: 40px; width: 108px; font-size: 28px; }
.menu-items { display: flex; gap: 38.500px; margin-left: 37px; }
.status { margin-left: auto; display: flex; align-items: center; padding-right: 46px; }
.st-stop { width: 32px; height: 32px; }
.st-cat { width: 32px; height: 34px; fill: #0b1a3c; }
.st-net { width: 52px; display: flex; flex-direction: column; font-size: 18px; line-height: 19px; }
.st-cc { width: 39px; height: 39px; }
.st-bt { width: 22px; height: 34px; }
.st-wifi { width: 42px; height: 34px; }
.st-vol { width: 40px; height: 34px; }
.st-pct { width: 61px; font-size: 25px; white-space: nowrap; }
.st-batt { width: 47px; height: 32px; }
.st-clock { width: 183px; white-space: nowrap; font-size: 28px; }
.st-a { width: 32px; height: 36px; border-radius: 5px; background: #0b1a3c; color: #c7d3ea; font-size: 24px; display: flex; align-items: center; justify-content: center; }
.st-search { width: 30px; height: 34px; }
.st-siri { width: 31px; height: 32px; }
.st-list { width: 37px; height: 30px; }

/* desktop + dock */
.desktop { flex: 1; min-height: 0; display: flex; padding-top: 2px; }
.dock-col { width: 76px; flex: none; }
.dock {
  width: 74px; margin-top: 326px; padding-top: 4px; height: 1101px;
  background: linear-gradient(180deg, #5576bd 0, #5f83cb 15%, #7094dc 30%, #5f80c8 50%, #4a6cb4 68%, #435f96 85%, #3a4d6f 100%);
  border-radius: 0 10px 12px 0;
}
.dock-item { position: relative; height: 56.1px; display: flex; align-items: center; justify-content: center; padding-left: 6px; }
.dock-item svg { width: 48px; height: 48px; }
.running::before { content: ""; position: absolute; left: 4px; top: 25px; width: 6px; height: 6px; border-radius: 50%; background: #0b1a3c; }
.dock-r span {
  width: 52px; height: 34px; border-radius: 50%; background: #7ea5d9; color: #f2f6fb;
  font: 30px/34px "Liberation Serif", serif; text-align: center;
}
.dock-sep { height: 1px; background: #1b2a48; margin: 9px 10px 5px 10px; }
.cal-m { font: 8px "Noto Sans CJK SC", sans-serif; fill: #fff; text-anchor: middle; }
.cal-d { font: 23px "Liberation Sans", sans-serif; fill: #333; text-anchor: middle; }
.map-t { font: 9px "Liberation Sans", sans-serif; fill: #333; text-anchor: middle; }
.badge-t { font: 12px "Liberation Sans", sans-serif; fill: #fff; text-anchor: middle; }
.word-t { font: bold 19px "Liberation Sans", sans-serif; fill: #fff; text-anchor: middle; }

/* browser window */
.window { flex: 1; min-width: 0; display: flex; flex-direction: column; border-radius: 14px 14px 0 0; overflow: hidden; background: #b2b2b2; }
.tabstrip { height: 84px; flex: none; background: #d8dbe0; display: flex; align-items: flex-end; padding-right: 31px; }
.lights { display: flex; gap: 16px; margin: 0 26px 29px 26px; }
.lights i { width: 24px; height: 24px; border-radius: 50%; display: block; }
.red { background: #ee4c5a; } .amber { background: #f5b731; } .green { background: #3fcb4c; }
.chrome-tab { width: 480px; height: 68px; background: #fff; border-radius: 14px 14px 0 0; display: flex; align-items: center; padding: 0 22px 0 25px; }
.favicon { width: 30px; height: 34px; }
.chrome-tab-title { margin-left: 16px; font-size: 25px; color: #3c4043; }
.chrome-tab-x { width: 20px; height: 20px; margin-left: auto; }
.newtab { width: 26px; height: 26px; margin: 0 0 21px 30px; }
.tabcaret { width: 28px; height: 28px; margin: 0 0 20px auto; }

.urlbar { height: 72px; flex: none; background: #fff; display: flex; align-items: center; padding-right: 40px; border-bottom: 0; }
.nav-ic { width: 28px; height: 28px; flex: none; }
.pill { flex: 1; margin-left: 30px; height: 56px; border-radius: 28px; background: #f0f1f3; display: flex; align-items: center; padding: 0 19px 0 22px; }
.info { width: 28px; height: 28px; }
.url { margin-left: 18px; font-size: 30.5px; color: #202124; }
.url em { font-style: normal; color: #53575c; }
.pill-translate { width: 30px; height: 34px; margin-left: auto; }
.tr-g { font: bold 15px "Liberation Sans", sans-serif; fill: #f0f1f3; text-anchor: middle; }
.tr-z { font: 11px "Noto Sans CJK SC", sans-serif; fill: #5f6368; text-anchor: middle; }
.pill-zoom { width: 28px; height: 34px; }
.pill-star { width: 32px; height: 34px; }
.abp { width: 34px; height: 38px; flex: none; }
.abp-t { font: bold 15px "Liberation Sans", sans-serif; fill: #fff; text-anchor: middle; }
.puzzle { width: 30px; height: 34px; flex: none; }
.avatar { width: 44px; height: 44px; flex: none; }
.dots { width: 8px; height: 28px; flex: none; }

/* JupyterLab */
.jp-menu { height: 62px; flex: none; background: #fff; border-top: 2px solid #d5d7da; display: flex; align-items: center; gap: 38px; padding-left: 20px; font-size: 29.500px; color: #1f1f1f; }
.jp-logo { width: 32px; height: 46px; margin-right: 7px; }
.jp-main { flex: 1; min-height: 0; display: flex; }
.sidebar { width: 70px; flex: none; background: #eeeeee; display: flex; flex-direction: column; align-items: center; gap: 71px; padding-top: 36px; }
.sidebar svg { width: 46px; height: 46px; fill: #616161; }
.work { flex: 1; min-width: 0; display: flex; flex-direction: column; padding: 12px 12px 14px 14px; }
.nb-tab { width: 473px; height: 58px; flex: none; background: #fff; border-top: 5px solid #3f87c9; display: flex; align-items: center; padding: 0 24px 10px 22px; }
.nb-icon { width: 26px; height: 26px; }
.nb-title { margin-left: 11px; font-size: 28.5px; color: #1a1a1a; white-space: nowrap; }
.nb-x { width: 22px; height: 22px; margin-left: auto; }
.nb-panel { flex: 1; min-height: 0; margin-left: 2px; display: flex; flex-direction: column; background: #fff; }
.nb-toolbar { height: 64px; flex: none; display: flex; align-items: center; gap: 34px; padding: 0 27px 2px 20px; border-bottom: 2px solid #b0b0b0; }
.nb-toolbar > svg { width: 32px; height: 32px; fill: #616161; flex: none; }
.celltype { font-size: 28px; margin-left: 6px; width: 76px; }
.nb-toolbar > .chev { width: 24px; height: 24px; margin-left: 25px; fill: none; }
.kernel { margin-left: auto; font-size: 28px; }
.nb-toolbar > .kernel-dot { width: 28px; height: 28px; margin-left: 2px; fill: none; }

.nb-scroll { flex: 1; min-height: 0; display: flex; overflow: hidden; }
.cells { flex: 1; min-width: 0; padding: 0 36px 0 32px; }
.scroll-col { width: 29px; flex: none; background: #f6f6f6; border-left: 2px solid #e2e2e2; padding: 78px 0 0 5px; }
.thumb { width: 16px; height: 36px; border-radius: 8px; background: #b5b5b5; }
.cell { display: flex; }
.collapser { width: 18px; flex: none; background: #2f94ea; border-radius: 0 0 5px 5px; }
.cell-output .collapser { border-radius: 5px; }
.collapser.off { background: transparent; }
.prompt { width: 142px; flex: none; padding: 12px 17px 0 0; text-align: right; color: #afafaf; font: 28.55px/36.1px "DejaVu Sans Mono", monospace; }
.cell-first { margin-top: -21.500px; }
.cell-output { margin-top: 12px; height: 750px; }
.cell-code { margin-top: 23px; }
.figure { width: 2400px; height: 751px; display: block; flex: none; }

.input { flex: 1; min-width: 0; border: 2px solid; padding: 1px 9px 8.500px; font: 28.55px/36.05px "DejaVu Sans Mono", "Noto Sans CJK SC", monospace; color: #1a1a1a; }
.input.active { border-color: #3d8bd0; background: #fff; }
.input.idle { border-color: #e0e0e0; background: #f5f5f5; padding-top: 12px; }
.ln { height: 36.05px; white-space: pre; }
.ln b { font-weight: normal; }
.cm { color: #408080; font-style: italic; }
.fn { color: #0055aa; }
.str { color: #a01c2c; }
.op { color: #aa22ff; }
.num { color: #008000; }

/* matplotlib figure */
.grid { stroke: #c2c2c2; stroke-width: 3; fill: none; }
.tick { stroke: #333; stroke-width: 3; fill: none; }
.band { stroke: #4467ac; stroke-width: 16; fill: none; stroke-linecap: round; stroke-linejoin: round; }
.beads { stroke: #4467ac; stroke-width: 18; fill: none; stroke-linecap: round; stroke-dasharray: 0 23 0 11 0 31; }
.pts { fill: #4467ac; }
.fit { stroke: #ab3d55; stroke-width: 3.5; fill: none; }
.frame { stroke: #333; stroke-width: 3; fill: none; }
.num-l { font: 36px "Liberation Mono", monospace; fill: #262626; transform: translateY(2px); }
.axis-l { font: 36px "Liberation Mono", monospace; fill: #262626; }
.title-l { font: 33px "Noto Sans CJK SC", sans-serif; fill: #303030; letter-spacing: 3px; }
.lat { font: 30px "DejaVu Sans Mono", monospace; letter-spacing: 0; fill: #222; }
.cursor { fill: #000; stroke: #fff; stroke-width: 1.5; }
```
